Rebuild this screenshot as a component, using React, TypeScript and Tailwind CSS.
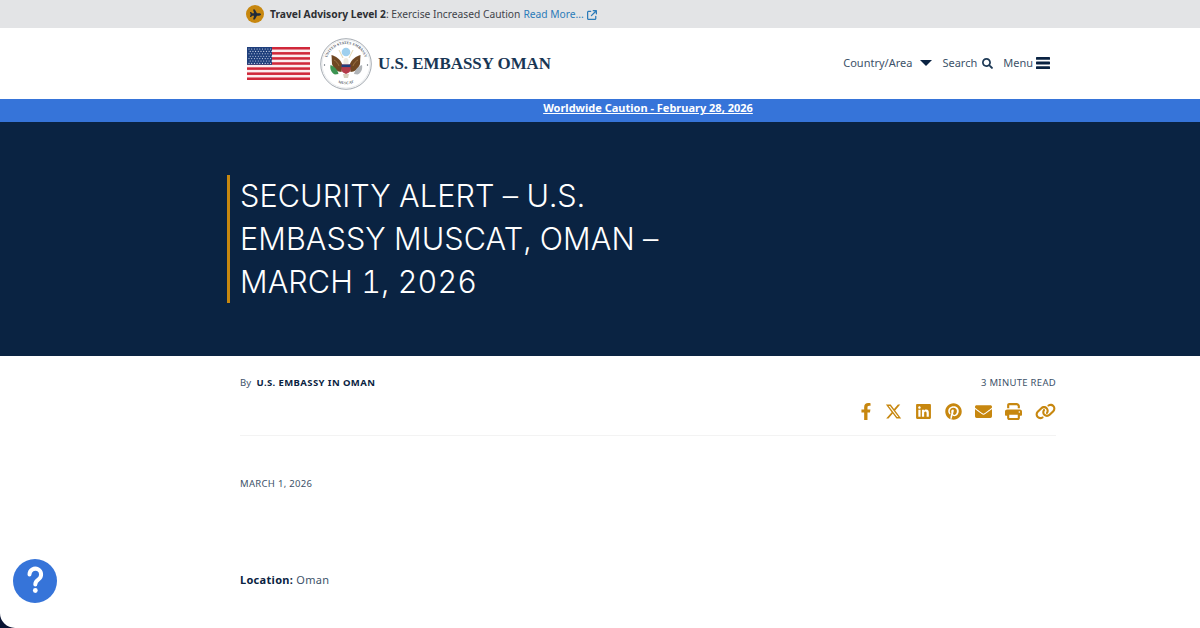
import React from "react";
import {
  FaPlane,
  FaSearch,
  FaFacebookF,
  FaLinkedin,
  FaPinterest,
  FaEnvelope,
} from "react-icons/fa";
import { FaArrowUpRightFromSquare, FaLink, FaPrint, FaXTwitter } from "react-icons/fa6";

const Flag: React.FC = () => {
  const stripes = [0, 1, 2, 3, 4, 5, 6];
  const dots: [number, number][] = [];
  for (let r = 0; r < 7; r++) {
    for (let c = 0; c < 9; c++) {
      dots.push([2 + c * 2.7 + (r % 2) * 1.2, 2 + r * 2.4]);
    }
  }
  return (
    <svg width="63" height="33" viewBox="0 0 63 33" className="shrink-0">
      <rect width="63" height="33" fill="#fbeef0" />
      {stripes.map((i) => (
        <rect key={i} y={i * 5.08} width="63" height="2.54" fill="#d0283a" />
      ))}
      <rect width="25" height="17.8" fill="#1f3f7c" />
      {dots.map(([x, y], i) => (
        <circle key={i} cx={x} cy={y} r="0.55" fill="#d6e0f0" />
      ))}
    </svg>
  );
};

const Seal: React.FC = () => (
  <svg width="52" height="52" viewBox="0 0 52 52" className="shrink-0">
    <circle cx="26" cy="26" r="25.3" fill="#fff" stroke="#9aa0a8" strokeWidth="0.9" />
    <circle cx="26" cy="26" r="24" fill="none" stroke="#c5c9ce" strokeWidth="0.4" />
    <defs>
      <path id="sealTop" d="M6 26a20 20 0 0 1 40 0" />
      <path id="sealBottom" d="M13.500 42a20.500 20.500 0 0 0 25 0" />
    </defs>
    <text fontSize="3.800" fill="#59616b" fontFamily="'Liberation Serif', serif" fontWeight="700">
      <textPath href="#sealTop" startOffset="50%" textAnchor="middle">
        UNITED STATES EMBASSY
      </textPath>
    </text>
    <text fontSize="3.800" fill="#59616b" fontFamily="'Liberation Serif', serif" fontWeight="700">
      <textPath href="#sealBottom" startOffset="50%" textAnchor="middle">
        MUSCAT
      </textPath>
    </text>
    <circle cx="4.500" cy="27" r="0.7" fill="#59616b" />
    <circle cx="47.500" cy="27" r="0.7" fill="#59616b" />
    <path d="M19 12l4 8M33 12l-4 8" stroke="#d5c48c" strokeWidth="0.7" />
    <circle cx="26" cy="14" r="4.300" fill="#9fd0ee" />
    <path d="M11.500 17c4 1 9 4 11 10l-1 7c-4 0-8-3-9.500-8z" fill="#6f4722" />
    <path d="M40.500 17c-4 1-9 4-11 10l1 7c4 0 8-3 9.500-8z" fill="#6f4722" />
    <path d="M14 22c2 1 4 3 5 6M38 22c-2 1-4 3-5 6" stroke="#a67c4c" strokeWidth="0.8" fill="none" />
    <path d="M23.500 23c0-2 1-3 2.500-3s2.500 1 2.500 3v3h-5z" fill="#efeadf" />
    <path d="M21.500 26.500h9v5.500c0 2-2.500 3.200-4.500 4-2-.8-4.500-2-4.500-4z" fill="#b43a48" />
    <rect x="21.500" y="26.500" width="9" height="2.600" fill="#1f3f7c" />
    <path d="M10.500 27c3 1 7 4 8 9l-3.500.5c-3-1-5.500-5-4.500-9.500z" fill="#3c9452" />
    <path d="M42 27c-3 1-7 4-8 9l3.500.5c3-1 5.500-5 4.500-9.500z" fill="#b0b4b8" />
    <path d="M23 36h6l-1 4h-4z" fill="#d7cfbd" />
  </svg>
);

const shareIcons = [
  { Icon: FaFacebookF, size: "w-[12px] h-[17px]" },
  { Icon: FaXTwitter, size: "w-[17px] h-[17px]" },
  { Icon: FaLinkedin, size: "w-[17px] h-[17px]" },
  { Icon: FaPinterest, size: "w-[17px] h-[17px]" },
  { Icon: FaEnvelope, size: "w-[17px] h-[17px]" },
  { Icon: FaPrint, size: "w-[17px] h-[17px]" },
  { Icon: FaLink, size: "w-[21px] h-[17px]" },
];

const App: React.FC = () => {
  return (
    <div className="h-[628px] overflow-hidden bg-[#0a1433] font-['Noto_Sans','Open_Sans',sans-serif] text-[#0a2342]">
      <div className="relative h-full overflow-hidden rounded-bl-[15px] bg-white">
        {/* Advisory bar */}
        <div className="flex h-[28px] items-center bg-[#e3e4e6] pl-[246px] text-[10.250px]">
          <span className="flex h-[18px] w-[18px] items-center justify-center rounded-full bg-[#c7870f]">
            <FaPlane className="h-[11px] w-[11px] text-[#1f2a3a]" />
          </span>
          <div className="mt-[1px] flex items-center">
            <span className="ml-[6px] font-bold text-[#2d2f33]">Travel Advisory Level 2</span>
            <span className="text-[#3f434a]">: Exercise Increased Caution</span>
            <span className="ml-[3px] text-[#2b7bb9]">Read More...</span>
            <FaArrowUpRightFromSquare className="ml-[3px] h-[10px] w-[10px] text-[#2b7bb9]" />
          </div>
        </div>

        {/* Header */}
        <div className="flex h-[71px] items-center justify-between pl-[247px] pr-[150px]">
          <div className="flex items-center">
            <Flag />
            <div className="ml-[10px]">
              <Seal />
            </div>
            <span className="ml-[6px] mt-[1px] font-['Liberation_Serif',serif] text-[16.900px] font-bold text-[#183654]">
              U.S. EMBASSY OMAN
            </span>
          </div>
          <div className="-mt-[1px] flex items-center text-[11px] text-[#3d5269]">
            <span>Country/Area</span>
            <span className="ml-[8px] h-0 w-0 border-x-[6px] border-t-[6px] border-x-transparent border-t-[#0a2342]" />
            <span className="ml-[10px]">Search</span>
            <FaSearch className="ml-[5px] h-[11px] w-[11px] text-[#1e3a56]" />
            <span className="ml-[10px]">Menu</span>
            <svg width="14" height="12" viewBox="0 0 14 12" className="ml-[3px]" fill="#0a2342">
              <rect width="14" height="2.800" rx="0.6" />
              <rect y="4.600" width="14" height="2.800" rx="0.6" />
              <rect y="9.200" width="14" height="2.800" rx="0.6" />
            </svg>
          </div>
        </div>

        {/* Caution banner */}
        <div className="flex h-[23px] items-center justify-center bg-[#3674d9] pb-[4px] pl-[96px] text-[11px] font-bold text-white underline">
          Worldwide Caution - February 28, 2026
        </div>

        {/* Hero */}
        <div className="h-[234px] bg-[#0a2342] pl-[227px] pt-[53px]">
          <div className="flow-root h-[128px] w-[450px] border-l-[3px] border-[#c7870f] pl-[10px]">
            <h1 className="-mt-[1px] font-['Inter',sans-serif] text-[30.600px] leading-[43px] font-light tracking-[0.08px] text-white tabular-nums">
              SECURITY ALERT – U.S. EMBASSY MUSCAT, OMAN – MARCH 1, 2026
            </h1>
          </div>
        </div>

        {/* Article */}
        <div className="mr-[144px] ml-[240px] text-[#0a2342]">
          <div className="flex justify-between border-b border-[#f3f3f3] pt-[20px] pb-[15px]">
            <div className="text-[9.500px] leading-[14px] text-[#3d5269]">
              By <span className="ml-[3px] font-bold tracking-[0.4px] text-[#0a2342]">U.S. EMBASSY IN OMAN</span>
            </div>
            <div className="flex flex-col items-end">
              <div className="text-[9.500px] leading-[13px] tracking-[0.3px] text-[#3d5269]">3 MINUTE READ</div>
              <div className="mt-[14px] flex h-[17px] items-center gap-[13px] text-[#c7870f]">
                {shareIcons.map(({ Icon, size }, i) => (
                  <Icon key={i} className={size} />
                ))}
              </div>
            </div>
          </div>
          <div className="mt-[41px] text-[9.500px] leading-[14px] tracking-[0.3px] text-[#3d5269]">MARCH 1, 2026</div>
          <div className="mt-[81px] text-[11px] leading-[16px] tracking-[0.3px] text-[#3d5269]">
            <span className="font-bold text-[#0a2342]">Location:</span> Oman
          </div>
        </div>

        {/* Help button */}
        <button className="absolute bottom-[25px] left-[13px] flex h-[44px] w-[44px] items-center justify-center rounded-full bg-[#3674d9]">
          <svg width="44" height="44" viewBox="0 0 44 44" fill="none">
            <path
              d="M16.500 15.500a5.800 5.800 0 1 1 9 4.800c-2 1.300-3.200 2.500-3.200 5.200"
              stroke="#fff"
              strokeWidth="4"
              strokeLinecap="round"
            />
            <circle cx="22.300" cy="31.500" r="2.400" fill="#fff" />
          </svg>
        </button>
      </div>
    </div>
  );
};

export default App;
